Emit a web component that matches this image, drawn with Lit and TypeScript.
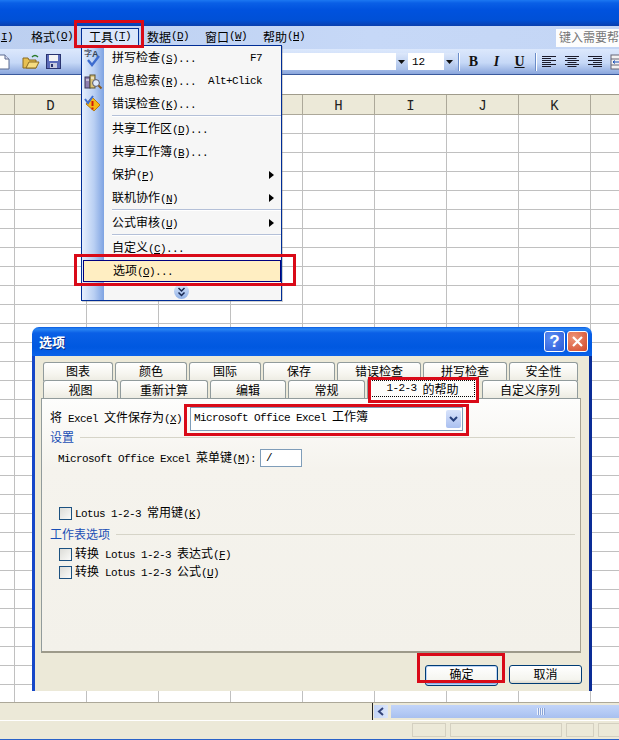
import { LitElement, html, css, svg } from "lit";
import { customElement } from "lit/decorators.js";

const parts = (s: string) => {
  const out: unknown[] = [];
  const re = /\((\w)\)|[\x20-\x7e]+?(?=\(\w\)|[^\x20-\x7e]|$)|[^\x20-\x7e]+/g;
  let m: RegExpExecArray | null;
  while ((m = re.exec(s))) {
    if (m[1]) out.push(html`<span class="l">(<u>${m[1]}</u>)</span>`);
    else if (/^[\x20-\x7e]/.test(m[0])) out.push(html`<span class="l">${m[0]}</span>`);
    else out.push(html`<span class="c">${m[0]}</span>`);
  }
  return out;
};

type Item = { label?: string; key?: string; sub?: boolean; sep?: boolean; hot?: boolean; icon?: string };
const MENU: Item[] = [
  { label: "拼写检查(S)...", key: "F7", icon: "spell" },
  { label: "信息检索(R)...", key: "Alt+Click", icon: "research" },
  { label: "错误检查(K)...", icon: "error" },
  { sep: true },
  { label: "共享工作区(D)..." },
  { label: "共享工作簿(B)..." },
  { label: "保护(P)", sub: true },
  { label: "联机协作(N)", sub: true },
  { sep: true },
  { label: "公式审核(U)", sub: true },
  { sep: true },
  { label: "自定义(C)..." },
  { label: "选项(O)...", hot: true },
];
const TABS1 = [["图表", 70], ["颜色", 72], ["国际", 72], ["保存", 72], ["错误检查", 84], ["拼写检查", 84], ["安全性", 69]] as const;
const TABS2 = [["视图", 75], ["重新计算", 88], ["编辑", 76], ["常规", 77], ["1-2-3 的帮助", 111], ["自定义序列", 96]] as const;
const COLS = ["D", "", "", "", "H", "I", "J", "K", ""];
const MENUBAR = [["格式(O)", 58, false], ["工具(T)", 58, true], ["数据(D)", 58, false], ["窗口(W)", 58, false], ["帮助(H)", 58, false]] as const;
const MARKS = [
  ["m1", 74, 20, 70, 28],
  ["m2", 74, 254, 222, 32],
  ["m3", 368, 377, 111, 26],
  ["m4", 184, 404, 285, 32],
  ["m5", 417, 653, 88, 30],
] as const;

const icons: Record<string, unknown> = {
  spell: svg`<svg width="20" height="20" viewBox="0 0 20 20"><text x="1" y="8" font-size="8" font-family="Noto Sans CJK SC" fill="#223">字</text><text x="9" y="9" font-size="9" font-weight="700" font-family="Liberation Sans" fill="#345">A</text><path d="M5 12l4 5 7-9" fill="none" stroke="#3d6ccf" stroke-width="2.4"/></svg>`,
  research: svg`<svg width="20" height="20" viewBox="0 0 20 20"><rect x="2" y="6" width="5" height="11" fill="#8e7fb0" stroke="#3c3a5c"/><rect x="7" y="4" width="5" height="13" fill="#d9c27a" stroke="#5c5230"/><path d="M3 9h3M8 7h3" stroke="#fff"/><circle cx="13" cy="12" r="3.4" fill="#dfeaff" stroke="#556"/><path d="M15.5 14.5l3 3" stroke="#8a5a20" stroke-width="2"/></svg>`,
  error: svg`<svg width="20" height="20" viewBox="0 0 20 20"><path d="M9 3l8 8-6 6-8-7z" fill="#f5b818" stroke="#b97a10"/><path d="M2 5l3 4 5-7" fill="none" stroke="#3d6ccf" stroke-width="2"/><path d="M9.5 7v5M9.5 13.5v2" stroke="#d01a0a" stroke-width="2"/></svg>`,
};
const align = (kind: string) => {
  const rows = [0, 1, 2, 3, 4, 5].map((i) => {
    const long = i % 2 === 0;
    const w = long ? 14 : 9;
    const x = kind === "l" ? 1 : kind === "c" ? (16 - w) / 2 : 15 - w;
    return svg`<rect x=${x} y=${2 + i * 2} width=${w} height="1" fill="#1a1a2a"/>`;
  });
  return html`<svg class="tool" width="16" height="16" viewBox="0 0 16 16">${rows}</svg>`;
};
const drop = html`<span class="drop"><svg width="7" height="4" viewBox="0 0 7 4"><path d="M0 0h7L3.5 4z" fill="#111"/></svg></span>`;

@customElement("app-root")
export class AppRoot extends LitElement {
  static styles = css`
    :host { display: block; width: 619px; height: 740px; }
    .root { position: relative; width: 619px; height: 740px; overflow: hidden; background: #fff; display: flex; flex-direction: column; font-size: 12px; color: #000; }
    .l { font-family: "Liberation Mono", monospace; font-size: 11px; letter-spacing: -0.6px; white-space: pre; }
    .c { font-family: "Noto Sans CJK SC", sans-serif; font-size: 12px; white-space: pre; }
    u { text-underline-offset: 1px; }
    .title { height: 26px; flex: none; background: linear-gradient(#1c78f2 0, #0a5fe6 3px, #0052de 10px, #0050d6 20px, #0a3fae 26px); }
    .menubar { height: 23px; flex: none; background: linear-gradient(90deg, #bccff0, #c6d8f7 60%, #c4d6f5); display: flex; align-items: center; position: relative; }
    .mcut { width: 13px; text-align: right; flex: none; margin-right: 10px; padding-bottom: 2px; }
    .mi { width: 58px; height: 19px; flex: none; display: flex; align-items: center; justify-content: center; box-sizing: border-box; margin-top: -1px; padding-bottom: 2px; }
    .mi.on { background: #dbe6fb; border: 1px solid #002d96; border-bottom-color: #5d7cc0; }
    .help { margin-left: auto; width: 63px; height: 18px; background: #fdfdfd; color: #777; display: flex; align-items: center; padding: 0 0 2px 3px; box-sizing: border-box; flex: none; }
    .help .c { color: #777; }
    .toolbar { height: 25px; flex: none; box-sizing: content-box; border-bottom: 1px solid #3b5a9c; background: linear-gradient(#dce8fc 0, #c6d8f7 55%, #8aa6dc 100%); display: flex; align-items: center; overflow: hidden; }
    .ticons { width: 90px; flex: none; display: flex; align-items: center; gap: 6px; margin-left: -4px; }
    .ticons .open { margin-left: 6px; }
    .combo { height: 17px; background: #fff; display: flex; justify-content: flex-end; align-items: center; box-sizing: border-box; flex: none; }
    .combo.font { width: 325px; margin-left: -4px; margin-right: 1px; }
    .combo.size { width: 47px; justify-content: space-between; padding-left: 4px; font-family: "Liberation Mono", monospace; font-size: 11px; }
    .drop { width: 11px; height: 17px; background: linear-gradient(#dde8fb, #a9c0e8); display: flex; align-items: center; justify-content: center; }
    .tsep { width: 1px; height: 18px; background: #6a8cc8; flex: none; box-shadow: 1px 0 #fff; }
    .tsep.a { margin: 0 3px; }
    .tsep.b { margin: 0 1px 0 4px; }
    .fmt { width: 23px; text-align: center; flex: none; font-family: "Liberation Serif", serif; font-size: 14px; color: #111; font-weight: 700; }
    .fmt.it { font-style: italic; }
    .tool { flex: none; margin: 0 3.5px; }
    .formula { height: 19px; flex: none; border-bottom: 1px solid #a09c8c; background: #fff; }
    .headers { height: 19px; flex: none; display: flex; background: #ece9d8; border-bottom: 1px solid #aca899; }
    .hc { width: 72px; box-sizing: border-box; flex: none; border-right: 1px solid #aca899; text-align: center; font-family: "Liberation Mono", monospace; font-size: 14px; line-height: 22px; color: #222; }
    .hc.first { width: 15px; }
    .grid { flex: none; height: 587px; background-color: #fff;
      background-image: linear-gradient(to right, transparent 71px, #c0c0c0 71px), linear-gradient(to bottom, transparent 18px, #c0c0c0 18px);
      background-size: 72px 100%, 100% 19px; background-position: 15px 0, 0 0; }
    .tabbar { height: 17px; flex: none; border-top: 1px solid #aca899; background: #ece9d8; display: flex; align-items: center; }
    .left { width: 372px; flex: none; height: 17px; border-right: 1px solid #222; }
    .sbtn { width: 14px; height: 13px; margin-left: 1px; flex: none; background: linear-gradient(90deg, #c3d4f6, #dbe6fb); display: flex; align-items: center; justify-content: center; }
    .thumb { flex: 1; height: 13px; margin-left: 3px; background: linear-gradient(#c2d4f8, #b3c9f4 60%, #a8c0ef); display: flex; align-items: center; justify-content: center; }
    .grip { width: 8px; height: 7px; background: repeating-linear-gradient(90deg, #eef3fd 0 1px, #8ba5d8 1px 2px); margin-left: 72px; }
    .white { height: 1px; flex: none; background: #fff; }
    .status { height: 18px; flex: none; background: #ece9d8; position: relative; display: flex; align-items: center; padding-left: 412px; gap: 4px; }
    .sp { height: 14px; border: 1px solid #d4d0c0; box-sizing: border-box; flex: none; }
    .bluebar { height: 2px; flex: none; background: #2a62c8; }

    .menu { position: absolute; left: 81px; top: 45px; width: 201px; height: 256px; box-sizing: border-box; border: 1px solid #002d96; background: linear-gradient(90deg, #e6effd 0, #b9cff3 12px, #7ea3e2 22px, #f6f6f6 22px); display: flex; flex-direction: column; box-shadow: 1px 1px 0 rgba(120,120,120,.35); z-index: 2; }
    .item { height: 23px; flex: none; display: flex; align-items: center; padding: 0 19px 2px 30px; position: relative; box-sizing: border-box; }
    .item .k { margin-left: auto; padding-top: 2px; }
    .item .ic { position: absolute; left: 1px; top: 2px; width: 20px; height: 20px; }
    .item .ar { position: absolute; right: 7px; top: 8px; width: 0; height: 0; border-left: 5px solid #000; border-top: 4.5px solid transparent; border-bottom: 4.5px solid transparent; }
    .sepl { height: 2px; flex: none; margin-left: 30px; background: #b4c0d8; border-bottom: 1px solid #fff; box-sizing: border-box; }
    .item.hot { height: 22px; margin: 1px 1px 0 1px; padding-left: 29px; background: #ffeec2; border: 1px solid #000080; width: 198px; }
    .more { flex: 1; display: flex; align-items: center; justify-content: center; }
    .more span { width: 15px; height: 15px; border-radius: 50%; background: linear-gradient(#dce8fb, #8fb0e6); display: flex; align-items: center; justify-content: center; margin-top: 1px; }

    .dialog { position: absolute; left: 32px; top: 327px; width: 560px; height: 364px; display: flex; flex-direction: column; z-index: 1; }
    .dtitle { height: 29px; flex: none; border-radius: 7px 7px 0 0; background: linear-gradient(#0a5be0 0, #2a86f4 2px, #0a5fe6 6px, #0058e0 20px, #0a62ea 29px); display: flex; align-items: center; padding: 0 4px 0 7px; gap: 2px; color: #fff; }
    .dtitle .name { font-family: "Noto Sans CJK SC", sans-serif; font-weight: 700; font-size: 13px; margin-right: auto; text-shadow: 1px 1px 0 #0a2f8a; }
    .wbtn { width: 21px; height: 21px; box-sizing: border-box; border: 1px solid #fff; border-radius: 3px; display: flex; align-items: center; justify-content: center; font-family: "Liberation Sans", sans-serif; font-weight: 700; font-size: 17px; color: #fff; }
    .wbtn.q { background: radial-gradient(circle at 30% 30%, #5a8cf2, #2a5ad8); }
    .wbtn.x { background: radial-gradient(circle at 30% 30%, #ee9477, #d2492a); }
    .dbody { flex: 1; background: #ece9d8; border-left: 3px solid #1647c8; border-right: 3px solid #0a2c96; padding: 6px 0 0 6px; display: flex; flex-direction: column; }
    .trow { display: flex; gap: 2px; padding-left: 2px; align-items: flex-start; position: relative; }
    .trow.two { margin-top: -1px; z-index: 1; height: 18px; }
    .tab { height: 19px; box-sizing: border-box; flex: none; border: 1px solid #919b9c; border-bottom: 0; border-radius: 3px 3px 0 0; background: linear-gradient(#fff, #f6f5ef 60%, #ecebe2); display: flex; align-items: center; justify-content: center; padding-bottom: 3px; }
    .trow.two .tab { height: 18px; padding-bottom: 1px; }
    .trow.two .tab.on { height: 21px; margin-top: -2px; margin-right: 2px; background: #fcfcfa; border-top: 2px solid #f0a030; position: relative; z-index: 2; padding-bottom: 2px; }
    .focus { outline: 1px dotted #000; outline-offset: 0; height: 15px; display: flex; align-items: center; width: 103px; justify-content: center; padding-bottom: 1px; box-sizing: border-box; }
    .panel { width: 540px; height: 255px; box-sizing: border-box; flex: none; border: 1px solid #919b9c; border-right: 1px solid #a5a292; border-bottom: 2px solid #9d9a8a; background: linear-gradient(#fdfdfc 0, #f5f3ed 70px, #f3f1ea); display: flex; flex-direction: column; padding-top: 8px; }
    .saverow { display: flex; align-items: center; height: 24px; padding-left: 8px; flex: none; }
    .saverow .lb { width: 140px; flex: none; padding-bottom: 4px; }
    .bigcombo { width: 273px; height: 24px; box-sizing: border-box; border: 1px solid #7f9db9; background: #fff; display: flex; align-items: center; padding-left: 3px; }
    .bigcombo .txt { padding-bottom: 7px; }
    .bigcombo .arrow { margin-left: auto; width: 15px; height: 18px; margin-right: 1px; border-radius: 2px; background: linear-gradient(#d8e3fb, #aac0f0); display: flex; align-items: center; justify-content: center; }
    .gh { display: flex; align-items: center; height: 13px; padding: 0 5px 0 8px; gap: 6px; flex: none; }
    .gh .c { color: #1a4fb5; padding-bottom: 2px; }
    .gh i { flex: 1; height: 1px; background: #d6d4c8; }
    .menukey { display: flex; align-items: center; height: 18px; padding-left: 16px; margin-top: 5px; flex: none; }
    .menukey .lb { width: 202px; flex: none; padding-bottom: 2px; }
    .keyin { width: 42px; height: 18px; box-sizing: border-box; border: 1px solid #7f9db9; background: #fff; padding-left: 5px; display: flex; align-items: center; }
    .chk { display: flex; align-items: center; height: 14px; padding-left: 17px; gap: 3px; flex: none; }
    .chk .t { padding-bottom: 2px; }
    .box { width: 13px; height: 13px; box-sizing: border-box; border: 1px solid #1c5180; background: linear-gradient(135deg, #dcdcd7, #fbfbf9); flex: none; }
    .gap1 { margin-top: 39px; } .gap2 { margin-top: 8px; } .gap3 { margin-top: 6px; } .gap4 { margin-top: 4px; }
    .foot { display: flex; justify-content: flex-end; gap: 11px; padding: 12px 7px 0 0; }
    .btn { width: 73px; height: 19px; box-sizing: border-box; border: 1px solid #003c74; border-radius: 3px; background: linear-gradient(#fff, #f4f4ee 80%, #dcd8cc); display: flex; align-items: center; justify-content: center; padding-bottom: 2px; }
    .btn.def { box-shadow: inset 0 0 0 1px #bcd4f6, inset 0 -1px 0 1px #89ade4; height: 21px; padding-bottom: 4px; }

    .mark { position: absolute; box-sizing: border-box; border: 3px solid #d90a18; z-index: 3; pointer-events: none; }
  `;

  render() {
    return html`<div class="root">
      <div class="title"></div>
      <div class="menubar">
        <div class="mcut"><span class="l"><u>I</u>)</span></div>
        ${MENUBAR.map(([t, w, on]) => html`<div class="mi ${on ? "on" : ""}">${parts(t)}</div>`)}
        <div class="help"><span class="c">键入需要帮</span></div>
      </div>
      <div class="toolbar">
        <div class="ticons">
          <svg width="14" height="16" viewBox="0 0 14 16"><path d="M1 1h8l4 4v10H1z" fill="#fff" stroke="#5a6a90"/><path d="M9 1v4h4" fill="#dde" stroke="#5a6a90"/></svg>
          <svg class="open" width="18" height="16" viewBox="0 0 18 16"><path d="M1 4h5l1 2h7v8H1z" fill="#e8c050" stroke="#8a6a20"/><path d="M4 14l3-6h10l-3 6z" fill="#f6dc80" stroke="#8a6a20"/><path d="M10 3q3-3 6 0" fill="none" stroke="#2a7a2a" stroke-width="1.4"/></svg>
          <svg width="15" height="15" viewBox="0 0 15 15"><rect x=".5" y=".5" width="14" height="14" fill="#5a6ab8" stroke="#2a3470"/><rect x="3" y="1" width="9" height="6" fill="#f4f4f4"/><rect x="4" y="9" width="7" height="5" fill="#c8cce0"/><rect x="5" y="10" width="2" height="3" fill="#2a3470"/></svg>
        </div>
        <div class="combo font">${drop}</div>
        <div class="combo size"><span>12</span>${drop}</div>
        <div class="tsep a"></div>
        <div class="fmt">B</div>
        <div class="fmt it">I</div>
        <div class="fmt"><u>U</u></div>
        <div class="tsep b"></div>
        ${align("l")}${align("c")}${align("r")}
        <svg class="tool" width="16" height="16" viewBox="0 0 16 16"><rect x="1" y="1" width="14" height="14" fill="#f2f2f2" stroke="#667"/><path d="M1 5h14M1 11h14" stroke="#667"/><path d="M3 8h10M5 6.5L3 8l2 1.5M11 6.5L13 8l-2 1.5" fill="none" stroke="#1a4fb5"/></svg>
      </div>
      <div class="formula"></div>
      <div class="headers">
        <div class="hc first"></div>
        ${COLS.map((c) => html`<div class="hc">${c}</div>`)}
      </div>
      <div class="grid"></div>
      <div class="tabbar">
        <div class="left"></div>
        <div class="sbtn"><svg width="8" height="9" viewBox="0 0 8 9"><path d="M6 1L2 4.5 6 8" fill="none" stroke="#33447a" stroke-width="2"/></svg></div>
        <div class="thumb"><div class="grip"></div></div>
      </div>
      <div class="white"></div>
      <div class="status">
        ${[34, 112, 28, 40].map((w) => html`<div class="sp" style="width:${w}px"></div>`)}
      </div>
      <div class="bluebar"></div>

      <div class="menu">
        ${MENU.map((m) =>
          m.sep
            ? html`<div class="sepl"></div>`
            : html`<div class="item ${m.hot ? "hot" : ""}">
                ${m.icon ? html`<span class="ic">${icons[m.icon]}</span>` : ""}
                <span>${parts(m.label!)}</span>
                ${m.key ? html`<span class="k l">${m.key}</span>` : ""}
                ${m.sub ? html`<span class="ar"></span>` : ""}
              </div>`
        )}
        <div class="more"><span><svg width="9" height="10" viewBox="0 0 9 10"><path d="M1.5 1l3 3 3-3M1.5 5.5l3 3 3-3" fill="none" stroke="#16264f" stroke-width="1.5"/></svg></span></div>
      </div>

      <div class="dialog">
        <div class="dtitle">
          <span class="name">选项</span>
          <div class="wbtn q">?</div>
          <div class="wbtn x"><svg width="13" height="13" viewBox="0 0 13 13"><path d="M2 2l9 9M11 2l-9 9" stroke="#fff" stroke-width="2.2"/></svg></div>
        </div>
        <div class="dbody">
          <div class="trow">
            ${TABS1.map(([t, w]) => html`<div class="tab" style="width:${w}px">${parts(t)}</div>`)}
          </div>
          <div class="trow two">
            ${TABS2.map(([t, w]) => {
              const on = t.startsWith("1-2-3");
              return html`<div class="tab ${on ? "on" : ""}" style="width:${w}px">
                ${on ? html`<span class="focus">${parts(t)}</span>` : parts(t)}
              </div>`;
            })}
          </div>
          <div class="panel">
            <div class="saverow">
              <span class="lb">${parts("将 Excel 文件保存为(X):")}</span>
              <div class="bigcombo">
                <span class="txt">${parts("Microsoft Office Excel 工作簿")}</span>
                <span class="arrow"><svg width="9" height="7" viewBox="0 0 9 7"><path d="M1 1l3.5 3.5L8 1" fill="none" stroke="#27407c" stroke-width="2"/></svg></span>
              </div>
            </div>
            <div class="gh"><span class="c">设置</span><i></i></div>
            <div class="menukey">
              <span class="lb">${parts("Microsoft Office Excel 菜单键(M):")}</span>
              <div class="keyin"><span class="l">/</span></div>
            </div>
            <div class="chk gap1"><div class="box"></div><span class="t">${parts("Lotus 1-2-3 常用键(K)")}</span></div>
            <div class="gh gap2"><span class="c">工作表选项</span><i></i></div>
            <div class="chk gap3"><div class="box"></div><span class="t">${parts("转换 Lotus 1-2-3 表达式(F)")}</span></div>
            <div class="chk gap4"><div class="box"></div><span class="t">${parts("转换 Lotus 1-2-3 公式(U)")}</span></div>
          </div>
          <div class="foot">
            <div class="btn def">${parts("确定")}</div>
            <div class="btn">${parts("取消")}</div>
          </div>
        </div>
      </div>

      ${MARKS.map(([, x, y, w, h]) => html`<div class="mark" style="left:${x}px;top:${y}px;width:${w}px;height:${h}px"></div>`)}
    </div>`;
  }
}
